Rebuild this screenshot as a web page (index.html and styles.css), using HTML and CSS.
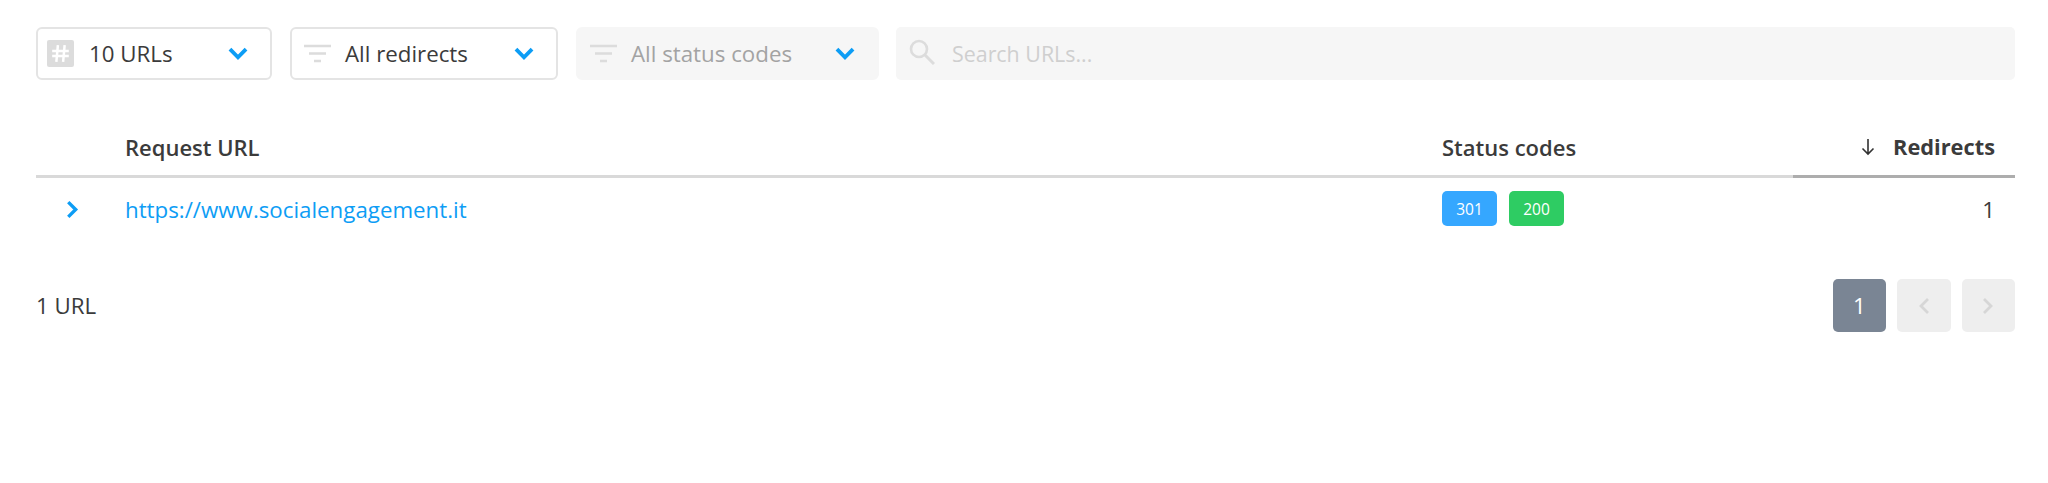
FILE: index.html
```html
<!DOCTYPE html>
<html lang="en">
<head>
<meta charset="utf-8">
<title>Redirects</title>
<link rel="stylesheet" href="styles.css">
</head>
<body>
<div class="page">
  <div class="toolbar">
    <div class="select select-urls">
      <svg class="icon-hash" viewBox="0 0 26 26"><rect width="26" height="26" rx="2" fill="#dcdcdc"/><path d="M10.500 5 9 21M17 5l-1.500 16M5 10.500h16M5 15.500h16" stroke="#fff" stroke-width="2.400" fill="none"/></svg>
      <span class="select-label">10 URLs</span>
      <svg class="chevron" viewBox="0 0 20 14"><path d="M2.500 3 10 10.500 17.500 3" fill="none" stroke="#0d9df5" stroke-width="3.600"/></svg>
    </div>
    <div class="select select-redirects">
      <svg class="icon-filter" viewBox="0 0 27 20"><path d="M0 2h27M5 9.500h17M10 17h7" stroke="#dcdcdc" stroke-width="2.400" fill="none"/></svg>
      <span class="select-label">All redirects</span>
      <svg class="chevron" viewBox="0 0 20 14"><path d="M2.500 3 10 10.500 17.500 3" fill="none" stroke="#0d9df5" stroke-width="3.600"/></svg>
    </div>
    <div class="select select-status is-disabled">
      <svg class="icon-filter" viewBox="0 0 27 20"><path d="M0 2h27M5 9.500h17M10 17h7" stroke="#dcdcdc" stroke-width="2.400" fill="none"/></svg>
      <span class="select-label">All status codes</span>
      <svg class="chevron" viewBox="0 0 20 14"><path d="M2.500 3 10 10.500 17.500 3" fill="none" stroke="#0d9df5" stroke-width="3.600"/></svg>
    </div>
    <div class="search">
      <svg class="icon-search" viewBox="0 0 26 26"><circle cx="10" cy="10" r="8" fill="none" stroke="#dcdcdc" stroke-width="2.600"/><path d="m16 16 9 9" stroke="#dcdcdc" stroke-width="3" fill="none"/></svg>
      <span class="search-placeholder">Search URLs...</span>
    </div>
  </div>

  <div class="table">
    <div class="row head">
      <div class="cell cell-toggle"></div>
      <div class="cell cell-url">Request URL</div>
      <div class="cell cell-status">Status codes</div>
      <div class="cell cell-redirects sorted">
        <svg class="icon-sort" viewBox="0 0 16 18"><path d="M8 1v15M2.500 10.500 8 16l5.500-5.500" fill="none" stroke="#333" stroke-width="1.600"/></svg>
        Redirects
      </div>
    </div>
    <div class="row body-row">
      <div class="cell cell-toggle">
        <svg class="icon-expand" viewBox="0 0 12 18"><path d="M2 2l7 7-7 7" fill="none" stroke="#0d9df5" stroke-width="3.200"/></svg>
      </div>
      <div class="cell cell-url"><a class="link" href="#">https://www.socialengagement.it</a></div>
      <div class="cell cell-status">
        <span class="badge badge-blue">301</span>
        <span class="badge badge-green">200</span>
      </div>
      <div class="cell cell-redirects">1</div>
    </div>
  </div>

  <div class="footer">
    <span class="count">1 URL</span>
    <div class="pager">
      <span class="page-btn is-current">1</span>
      <span class="page-btn"><svg class="icon-page" viewBox="0 0 12 18"><path d="M10 2 3 9l7 7" fill="none" stroke="#d6d6d6" stroke-width="2.800"/></svg></span>
      <span class="page-btn"><svg class="icon-page" viewBox="0 0 12 18"><path d="m2 2 7 7-7 7" fill="none" stroke="#d6d6d6" stroke-width="2.800"/></svg></span>
    </div>
  </div>
</div>
</body>
</html>
```

FILE: styles.css
```css
* { box-sizing: border-box; }
html, body { margin: 0; background: #fff; }
body {
  font-family: "Open Sans", "Noto Sans", sans-serif;
  font-size: 22.3px;
  color: #3b3b3b;
}
.page { padding: 27px 33px 0 36px; }

.toolbar { display: flex; height: 53px; align-items: stretch; }
.select {
  display: flex;
  align-items: center;
  border: 2px solid #e4e4e4;
  border-radius: 6px;
  padding: 0 21px 0 10px;
  margin-right: 18px;
  background: #fff;
}
.select-urls { width: 236px; }
.select-redirects { width: 268px; }
.select-status {
  width: 303px;
  margin-right: 17px;
  border-color: #f6f6f6;
  background: #f6f6f6;
  color: #a3a3a3;
}
.select-label { flex: 1; white-space: nowrap; }
.icon-hash { width: 27px; height: 27px; margin-right: 15px; margin-left: -1px; }
.icon-filter { width: 27px; height: 20px; margin-right: 14px; margin-left: 2px; }
.chevron { width: 22px; height: 15px; }
.search {
  flex: 1;
  display: flex;
  align-items: center;
  background: #f6f6f6;
  border-radius: 5px;
  padding-left: 13px;
}
.icon-search { width: 26px; height: 26px; margin-right: 17px; margin-top: -3px; }
.search-placeholder { color: #cfcfcf; white-space: nowrap; font-size: 21.4px; }

.table { margin-top: 24px; }
.row { display: flex; align-items: center; }
.head { height: 74px; font-weight: 600; font-size: 22px; }
.body-row { height: 63px; }
.head .cell { height: 74px; padding-top: 14px; display: flex; align-items: center; border-bottom: 3px solid #d9d9d9; }
.cell-toggle { width: 89px; padding-left: 30px; display: flex; }
.cell-url { flex: 1; }
.cell-status { width: 351px; display: flex; gap: 12px; }
.cell-redirects { width: 222px; padding-right: 20px; display: flex; justify-content: flex-end; align-items: center; }
.head .sorted { border-bottom-color: #adadad; font-weight: 700; font-size: 21.8px; }
.icon-sort { width: 16px; height: 18px; margin-right: 17px; }
.icon-expand { width: 13px; height: 19px; }
.link { color: #0d9df5; text-decoration: none; }
.badge {
  width: 55px;
  height: 35px;
  margin-top: -2px;
  border-radius: 5px;
  color: #fff;
  font-size: 15.500px;
  display: flex;
  align-items: center;
  justify-content: center;
}
.badge-blue { background: #35a7ff; }
.badge-green { background: #2ecc63; }

.footer {
  margin-top: 38px;
  display: flex;
  align-items: center;
  justify-content: space-between;
}
.pager { display: flex; gap: 11px; }
.page-btn {
  width: 53.500px;
  height: 53px;
  border-radius: 5px;
  background: #eeeeee;
  display: flex;
  align-items: center;
  justify-content: center;
}
.page-btn.is-current { background: #7a8594; color: #fff; }
.icon-page { width: 12px; height: 18px; }
```
